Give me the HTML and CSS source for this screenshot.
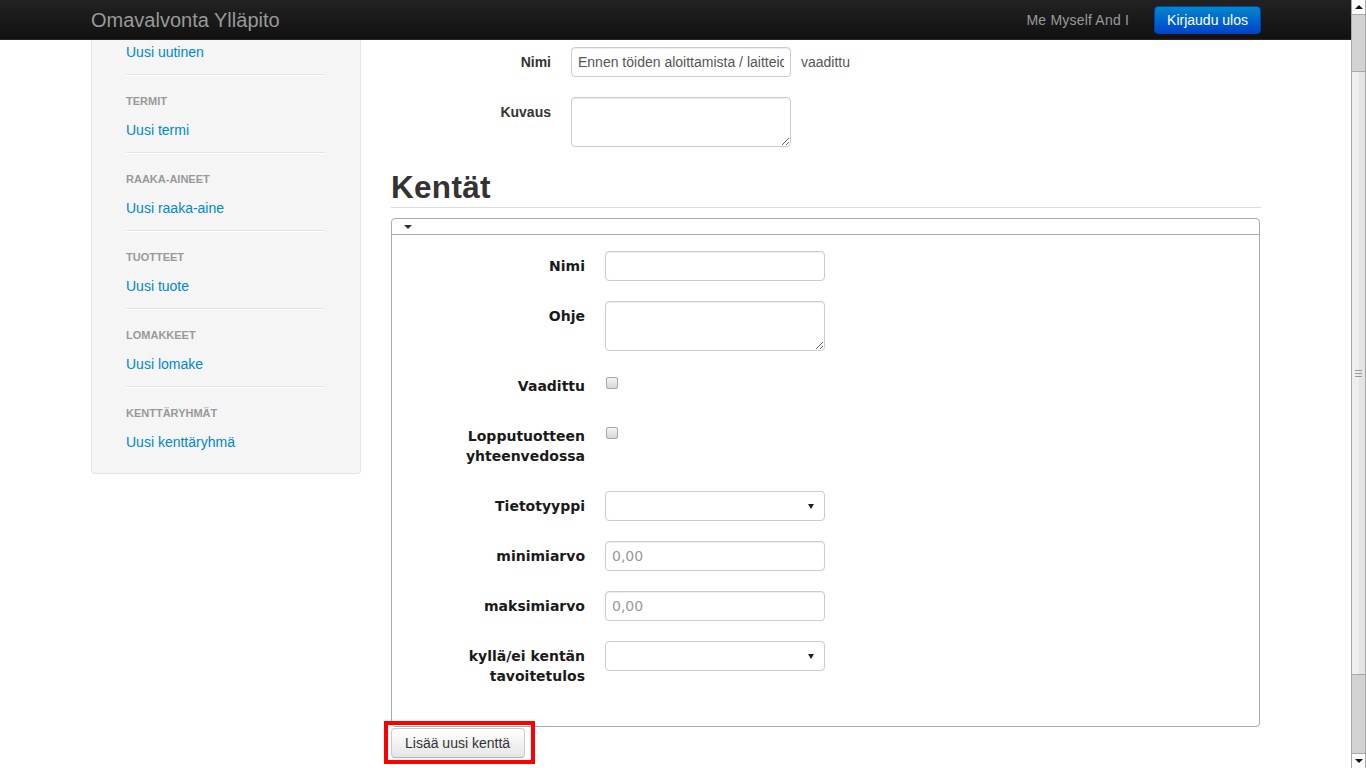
FILE: index.html
```html
<!DOCTYPE html>
<html lang="fi">
<head>
<meta charset="utf-8">
<title>Omavalvonta Ylläpito</title>
<link rel="stylesheet" href="styles.css">
</head>
<body>
<div class="page">
  <header class="navbar">
    <div class="container nav-inner">
      <a class="brand">Omavalvonta Ylläpito</a>
      <div class="nav-right">
        <span class="user">Me Myself And I</span>
        <a class="btn-primary">Kirjaudu ulos</a>
      </div>
    </div>
  </header>

  <div class="container row">
    <aside class="sidebar">
      <ul class="nav-list">
        <li class="nav-link"><a>Uusi uutinen</a></li>
        <li class="divider"></li>
        <li class="nav-header">Termit</li>
        <li class="nav-link"><a>Uusi termi</a></li>
        <li class="divider"></li>
        <li class="nav-header">Raaka-aineet</li>
        <li class="nav-link"><a>Uusi raaka-aine</a></li>
        <li class="divider"></li>
        <li class="nav-header">Tuotteet</li>
        <li class="nav-link"><a>Uusi tuote</a></li>
        <li class="divider"></li>
        <li class="nav-header">Lomakkeet</li>
        <li class="nav-link"><a>Uusi lomake</a></li>
        <li class="divider"></li>
        <li class="nav-header">Kenttäryhmät</li>
        <li class="nav-link"><a>Uusi kenttäryhmä</a></li>
      </ul>
    </aside>

    <main class="main">
      <div class="form-group">
        <label class="form-label">Nimi</label>
        <div class="form-controls">
          <input class="input" type="text" value="Ennen töiden aloittamista / laitteiden tarkastus">
          <span class="help">vaadittu</span>
        </div>
      </div>
      <div class="form-group">
        <label class="form-label">Kuvaus</label>
        <div class="form-controls">
          <textarea class="textarea"></textarea>
        </div>
      </div>

      <h2 class="section-title">Kentät</h2>

      <div class="panel">
        <div class="panel-head"><span class="caret"></span></div>
        <div class="panel-body">
          <div class="field-group">
            <label class="field-label">Nimi</label>
            <div class="field-controls"><input class="input" type="text"></div>
          </div>
          <div class="field-group">
            <label class="field-label">Ohje</label>
            <div class="field-controls"><textarea class="textarea"></textarea></div>
          </div>
          <div class="field-group">
            <label class="field-label">Vaadittu</label>
            <div class="field-controls"><input class="checkbox" type="checkbox"></div>
          </div>
          <div class="field-group">
            <label class="field-label">Lopputuotteen yhteenvedossa</label>
            <div class="field-controls"><input class="checkbox" type="checkbox"></div>
          </div>
          <div class="field-group">
            <label class="field-label">Tietotyyppi</label>
            <div class="field-controls"><div class="select"><span class="arrow"></span></div></div>
          </div>
          <div class="field-group">
            <label class="field-label">minimiarvo</label>
            <div class="field-controls"><input class="input num" type="text" placeholder="0,00"></div>
          </div>
          <div class="field-group">
            <label class="field-label">maksimiarvo</label>
            <div class="field-controls"><input class="input num" type="text" placeholder="0,00"></div>
          </div>
          <div class="field-group">
            <label class="field-label">kyllä/ei kentän tavoitetulos</label>
            <div class="field-controls"><div class="select"><span class="arrow"></span></div></div>
          </div>
        </div>
      </div>

      <div class="actions">
        <span class="highlight"><button class="btn" type="button">Lisää uusi kenttä</button></span>
      </div>
    </main>
  </div>
</div>

<div class="scrollbar">
  <div class="sb-btn sb-btn-top"><span class="sb-up"></span></div>
  <div class="sb-track-top"></div>
  <div class="sb-thumb"><span class="grip"></span></div>
  <div class="sb-track-bottom"></div>
  <div class="sb-btn sb-btn-bottom"><span class="sb-down"></span></div>
</div>
</body>
</html>
```

FILE: styles.css
```css
html, body {
  margin: 0;
  padding: 0;
  overflow: hidden;
  height: 100%;
}
body {
  font-family: "Liberation Sans", Arial, sans-serif;
  font-size: 14px;
  line-height: 20px;
  color: #333;
  background: #fff;
}
.page {
  margin-right: 14px;
}
.container {
  width: 1170px;
  margin: 0 auto;
}

/* navbar */
.navbar {
  height: 40px;
  box-sizing: border-box;
  background: linear-gradient(#222222, #111111);
  border-bottom: 1px solid #252525;
}
.nav-inner {
  display: flex;
  align-items: center;
  justify-content: space-between;
  height: 39px;
}
.brand {
  font-size: 20px;
  line-height: 20px;
  color: #999;
}
.nav-right {
  display: flex;
  align-items: center;
  gap: 25px;
}
.user {
  color: #999;
  font-size: 14px;
  letter-spacing: 0.2px;
}
.btn-primary {
  display: inline-block;
  box-sizing: border-box;
  height: 28px;
  padding: 3px 12px;
  line-height: 20px;
  color: #fff;
  background: linear-gradient(#0088cc, #0044cc);
  border: 1px solid #0044aa;
  border-radius: 4px;
  margin-top: 1px;
}

/* layout */
.row {
  display: flex;
  gap: 30px;
  align-items: flex-start;
}

/* sidebar */
.sidebar {
  width: 270px;
  box-sizing: border-box;
  background: #f5f5f5;
  border: 1px solid #e3e3e3;
  border-top: none;
  border-radius: 0 0 4px 4px;
  padding: 2px 35px 21px 34px;
}
.nav-list {
  list-style: none;
  margin: 0;
  padding: 0;
}
.nav-link a {
  color: #0088cc;
  display: block;
  line-height: 20px;
}
.divider {
  height: 1px;
  background: #e5e5e5;
  border-bottom: 1px solid #fff;
  margin: 12px 0 15px;
}
.nav-header {
  font-size: 11px;
  font-weight: bold;
  line-height: 20px;
  color: #999;
  text-transform: uppercase;
  margin-bottom: 9px;
}

/* main */
.main {
  width: 870px;
  padding-top: 7px;
}
.form-group,
.field-group {
  display: flex;
  margin-bottom: 20px;
}
.form-label,
.field-label {
  width: 160px;
  flex: none;
  text-align: right;
  font-weight: bold;
  padding: 5px 0;
  line-height: 20px;
}
.field-label {
  font-family: "DejaVu Sans", Verdana, sans-serif;
  font-size: 14px;
  color: #1a1a1a;
}
.form-controls,
.field-controls {
  margin-left: 20px;
  display: flex;
  align-items: flex-start;
}
.form-controls {
  align-items: center;
  height: 30px;
}
.form-group:nth-child(2) .form-controls {
  height: auto;
}
.input {
  box-sizing: border-box;
  width: 220px;
  height: 30px;
  padding: 4px 6px;
  font-family: "Liberation Sans", Arial, sans-serif;
  font-size: 14px;
  line-height: 20px;
  color: #555;
  background: #fff;
  border: 1px solid #ccc;
  border-radius: 4px;
  box-shadow: inset 0 1px 1px rgba(0,0,0,0.075);
  outline: none;
  margin: 0;
}
.input.num {
  font-family: "DejaVu Sans", Verdana, sans-serif;
}
.input::placeholder {
  color: #999;
}
.help {
  margin-left: 10px;
  color: #555;
}
.textarea {
  box-sizing: border-box;
  width: 220px;
  height: 50px;
  padding: 4px 6px;
  border: 1px solid #ccc;
  border-radius: 4px;
  box-shadow: inset 0 1px 1px rgba(0,0,0,0.075);
  margin: 0;
  font-family: "Liberation Sans", Arial, sans-serif;
  font-size: 14px;
  resize: both;
  display: block;
}
.checkbox {
  appearance: none;
  -webkit-appearance: none;
  width: 12px;
  height: 12px;
  margin: 6px 0 0 1px;
  border: 1px solid #a6a6a6;
  border-radius: 2px;
  background: linear-gradient(#f4f4f4, #d6d6d6);
}
.select {
  position: relative;
  box-sizing: border-box;
  width: 220px;
  height: 30px;
  border: 1px solid #ccc;
  border-radius: 4px;
  background: #fff;
}
.arrow {
  position: absolute;
  right: 10px;
  top: 12px;
  width: 0;
  height: 0;
  border-left: 3px solid transparent;
  border-right: 3px solid transparent;
  border-top: 5px solid #222;
}

.section-title {
  font-size: 31.5px;
  line-height: 40px;
  font-weight: bold;
  margin: 0;
  color: #333;
  border-bottom: 1px solid #ddd;
  letter-spacing: 0.3px;
}

.panel {
  margin-top: 10px;
  border: 1px solid #aaa;
  border-radius: 4px;
  margin-right: 1px;
}
.panel-head {
  height: 15px;
  border-bottom: 1px solid #aaa;
  display: flex;
  align-items: center;
  padding-left: 12px;
}
.caret {
  width: 0;
  height: 0;
  border-left: 4px solid transparent;
  border-right: 4px solid transparent;
  border-top: 4px solid #333;
}
.panel-body {
  padding: 16px 33px 15px 33px;
}

.actions {
  margin-top: 1px;
}
.highlight {
  position: relative;
  display: inline-block;
}
.highlight::after {
  content: "";
  position: absolute;
  top: -7px;
  left: -7px;
  right: -10px;
  bottom: -6px;
  border: 4px solid #ff0000;
}
.btn {
  box-sizing: border-box;
  height: 30px;
  padding: 4px 14px 4px 13px;
  font-family: "Liberation Sans", Arial, sans-serif;
  font-size: 14px;
  line-height: 20px;
  color: #333;
  background: linear-gradient(#ffffff, #e6e6e6);
  border: 1px solid #ccc;
  border-bottom-color: #b3b3b3;
  border-radius: 4px;
  margin: 0;
}

/* fake scrollbar */
.scrollbar {
  position: fixed;
  top: 0;
  right: 0;
  width: 15px;
  height: 100%;
  display: flex;
  flex-direction: column;
  background: #d2d2d2;
  border-left: 1px solid #a8a8a8;
  border-right: 1px solid #a8a8a8;
  box-sizing: border-box;
}
.sb-btn {
  background: #fdfdfd;
  display: flex;
  align-items: center;
  justify-content: center;
}
.sb-btn-top {
  height: 14px;
  border-bottom: 1px solid #a8a8a8;
}
.sb-btn-bottom {
  height: 15px;
  border-top: 1px solid #a8a8a8;
  box-sizing: border-box;
}
.sb-up {
  width: 0;
  height: 0;
  border-left: 4px solid transparent;
  border-right: 4px solid transparent;
  border-bottom: 4px solid #111;
}
.sb-down {
  width: 0;
  height: 0;
  border-left: 4px solid transparent;
  border-right: 4px solid transparent;
  border-top: 4px solid #111;
}
.sb-track-top {
  height: 56px;
}
.sb-thumb {
  box-sizing: border-box;
  height: 604px;
  background: linear-gradient(90deg, #efefef 55%, #e4e4e4 55%);
  border-top: 1px solid #a8a8a8;
  border-bottom: 1px solid #a8a8a8;
  display: flex;
  align-items: center;
  justify-content: center;
}
.grip {
  width: 7px;
  height: 5px;
  border-top: 1px solid #999;
  border-bottom: 1px solid #999;
  background: linear-gradient(#999, #999) center / 100% 1px no-repeat;
}
.sb-track-bottom {
  flex: 1;
}
```
